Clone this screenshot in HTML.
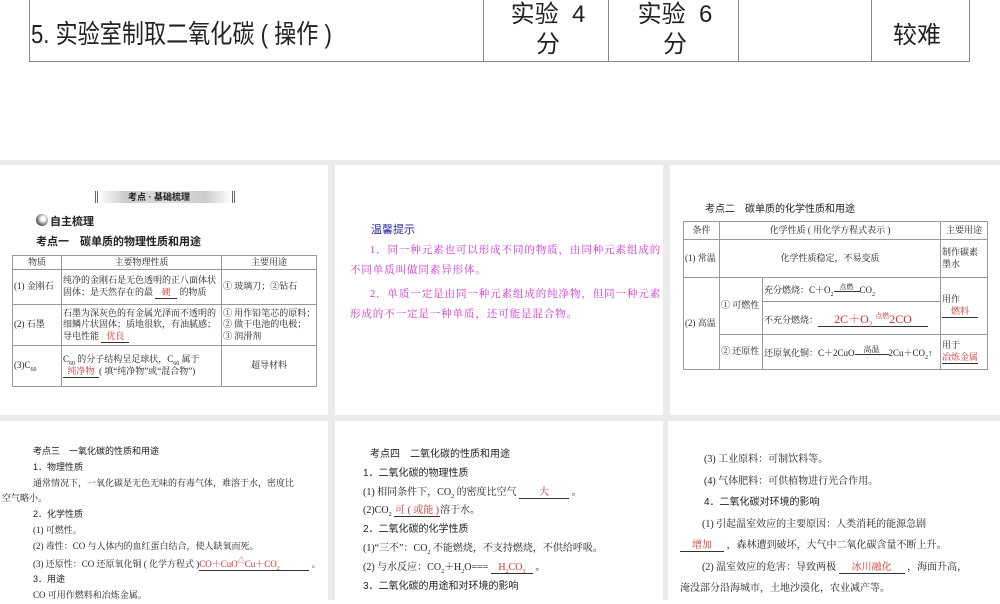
<!DOCTYPE html>
<html><head><meta charset="utf-8"><style>
*{margin:0;padding:0;box-sizing:border-box}
body{width:1000px;height:600px;background:#fff;position:relative;overflow:hidden;font-family:"Liberation Serif","Noto Serif CJK SC",serif;color:#222}
sub{line-height:0}
.a{position:absolute;white-space:nowrap}
.gray{position:absolute;left:0;top:160px;width:1000px;height:440px;background:#ebebeb}
.p{position:absolute;background:#fff}
.s{font-family:"Liberation Sans","Noto Sans CJK SC",sans-serif}
.r{color:#d03030}
.u{border-bottom:1px solid #333;display:inline-block;text-align:center;line-height:11px}
table{border-collapse:collapse;position:absolute;font-size:9px;table-layout:fixed}
td{border:1px solid #999;padding:0 1px;line-height:11.5px;vertical-align:middle;overflow:hidden}
</style></head><body>
<div class="a" style="left:29px;top:0;width:941px;height:62px;border:1px solid #888;border-top:none"></div>
<div class="a" style="left:483px;top:0;width:1px;height:62px;background:#888"></div>
<div class="a" style="left:608px;top:0;width:1px;height:62px;background:#888"></div>
<div class="a" style="left:738px;top:0;width:1px;height:62px;background:#888"></div>
<div class="a" style="left:871px;top:0;width:1px;height:62px;background:#888"></div>
<div class="a s" style="left:31px;top:14px;font-size:26px;transform:scaleX(0.85);transform-origin:left;color:#222">5. 实验室制取二氧化碳 ( 操作 )</div>
<div class="a s" style="left:498px;top:0;width:100px;font-size:24px;line-height:30px;text-align:center;color:#222">实验&nbsp;&nbsp;4<br>分</div>
<div class="a s" style="left:625px;top:0;width:100px;font-size:24px;line-height:30px;text-align:center;color:#222">实验&nbsp;&nbsp;6<br>分</div>
<div class="a s" style="left:893px;top:15px;font-size:24px;color:#222">较难</div>

<div class="gray"></div>
<div class="p" style="left:0;top:165px;width:328px;height:250px"></div>
<div class="a" style="left:95px;top:191px;width:140px;height:12px;background:linear-gradient(90deg,#fff,#ccc 20%,#ddd 50%,#ccc 80%,#fff);border-left:3px double #666;border-right:3px double #666"></div>
<div class="a s" style="left:128px;top:190px;font-size:9px;font-weight:bold">考点 · 基础梳理</div>
<div class="a" style="left:36px;top:214px;width:12px;height:12px;border-radius:6px;background:radial-gradient(circle at 60% 40%,#fff 20%,#555 70%)"></div>
<div class="a s" style="left:50px;top:213px;font-size:11px;font-weight:bold">自主梳理</div>
<div class="a s" style="left:36px;top:233px;font-size:11px;font-weight:bold">考点一　碳单质的物理性质和用途</div>
<table style="left:12px;top:255px;width:305px">
<tr style="height:14px"><td style="width:49px;text-align:center">物质</td><td style="width:160px;text-align:center">主要物理性质</td><td style="text-align:center">主要用途</td></tr>
<tr style="height:35px"><td>(1) 金刚石</td><td>纯净的金刚石是无色透明的正八面体状固体；是天然存在的最 <span class="u r" style="width:22px">硬</span> 的物质</td><td>① 玻璃刀；②钻石</td></tr>
<tr style="height:41px"><td>(2) 石墨</td><td>石墨为深灰色的有金属光泽而不透明的细鳞片状固体；质地很软，有油腻感；导电性能 <span class="u r" style="width:28px">优良</span></td><td style="white-space:nowrap">① 用作铅笔芯的原料；<br>② 做干电池的电极；<br>③ 润滑剂</td></tr>
<tr style="height:41px"><td>(3)C<sub style="font-size:6px">60</sub></td><td>C<sub style="font-size:6px">60</sub> 的分子结构呈足球状，C<sub style="font-size:6px">60</sub> 属于<br><span class="u r" style="width:36px">纯净物</span>( 填“纯净物”或“混合物”)</td><td style="text-align:center">超导材料</td></tr>
</table>
<div class="p" style="left:335px;top:165px;width:328px;height:250px"></div>
<div class="a s" style="left:371px;top:221px;font-size:11px;color:#2a2aa8">温馨提示</div>
<div class="a" style="left:350px;top:241px;width:313px;font-size:10.5px;letter-spacing:0.9px;line-height:20px;color:#d030d0;white-space:normal;text-indent:20px">1．同一种元素也可以形成不同的物质，由同种元素组成的不同单质叫做同素异形体。</div>
<div class="a" style="left:350px;top:285px;width:313px;font-size:10.5px;letter-spacing:0.9px;line-height:20px;color:#d030d0;white-space:normal;text-indent:20px">2．单质一定是由同一种元素组成的纯净物，但同一种元素形成的不一定是一种单质，还可能是混合物。</div>
<div class="p" style="left:670px;top:165px;width:330px;height:250px"></div>
<div class="a s" style="left:705px;top:200px;font-size:10px">考点二　碳单质的化学性质和用途</div>
<table style="left:683px;top:221px;width:304px">
<colgroup><col style="width:36px"><col style="width:43px"><col style="width:178px"><col style="width:47px"></colgroup>
<tr style="height:18px"><td style="text-align:center">条件</td><td colspan="2" style="text-align:center">化学性质 ( 用化学方程式表示 )</td><td style="text-align:center">主要用途</td></tr>
<tr style="height:38px"><td>(1) 常温</td><td colspan="2" style="text-align:center">化学性质稳定，不易变质</td><td>制作碳素<br>墨水</td></tr>
<tr style="height:24px"><td rowspan="3">(2) 高温</td><td rowspan="2">① 可燃性</td><td style="white-space:nowrap">充分燃烧：C＋O<sub style="font-size:6px">2</sub><span style="display:inline-block;border-bottom:1px solid #333;font-size:7px;line-height:8px;width:26px;text-align:center;vertical-align:4px">点燃</span>CO<sub style="font-size:6px">2</sub></td><td rowspan="2">用作<br><span class="u r" style="width:36px">燃料</span></td></tr>
<tr style="height:33px"><td style="white-space:nowrap">不充分燃烧：<span class="u r" style="width:110px;font-size:12px;line-height:14px">2C＋O<sub style="font-size:7px">2</sub> <span style="font-size:7px;vertical-align:5px">点燃</span>2CO</span></td></tr>
<tr style="height:35px"><td>② 还原性</td><td style="white-space:nowrap">还原氧化铜：C＋2CuO<span style="display:inline-block;border-bottom:1px solid #333;font-size:8px;line-height:9px;width:34px;text-align:center;vertical-align:4px">高温</span>2Cu＋CO<sub style="font-size:6px">2</sub>↑</td><td>用于<br><span class="u r">冶炼金属</span></td></tr>
</table>
<div class="p" style="left:0;top:421px;width:328px;height:179px"></div>
<div class="a" style="left:20px;top:444px;font-size:9px;line-height:15.8px">
<div class="s" style="padding-left:13px">考点三　一氧化碳的性质和用途</div>
<div class="s" style="padding-left:13px">1．物理性质</div>
<div style="padding-left:13px">通常情况下，一氧化碳是无色无味的有毒气体，难溶于水，密度比</div>
<div style="margin-left:-18px">空气略小。</div>
<div class="s" style="padding-left:13px">2．化学性质</div>
<div style="padding-left:13px">(1) 可燃性。</div>
<div style="padding-left:13px">(2) 毒性：CO 与人体内的血红蛋白结合，使人缺氧而死。</div>
<div style="padding-left:13px">(3) 还原性：CO 还原氧化铜 ( 化学方程式 )<span class="u r" style="width:110px;text-align:left">CO＋CuO<span style="font-size:7px;vertical-align:5px">△</span>Cu＋CO<sub style="font-size:6px">2</sub></span> 。</div>
<div class="s" style="padding-left:13px">3．用途</div>
<div style="padding-left:13px">CO 可用作燃料和冶炼金属。</div>
</div>
<div class="p" style="left:335px;top:421px;width:328px;height:179px"></div>
<div class="a" style="left:363px;top:446px;font-size:10px;line-height:18.8px">
<div class="s" style="padding-left:7px">考点四　二氧化碳的性质和用途</div>
<div class="s">1．二氧化碳的物理性质</div>
<div>(1) 相同条件下，CO<sub style="font-size:6px">2</sub> 的密度比空气 <span class="u r" style="width:50px">大</span> 。</div>
<div>(2)CO<sub style="font-size:6px">2</sub> <span class="u r" style="width:46px">可 ( 或能 )</span>溶于水。</div>
<div class="s">2．二氧化碳的化学性质</div>
<div>(1)“三不”：CO<sub style="font-size:6px">2</sub> 不能燃烧，不支持燃烧，不供给呼吸。</div>
<div>(2) 与水反应：CO<sub style="font-size:6px">2</sub>＋H<sub style="font-size:6px">2</sub>O=== <span class="u r" style="width:42px">H<sub style="font-size:6px">2</sub>CO<sub style="font-size:6px">3</sub></span> 。</div>
<div class="s">3．二氧化碳的用途和对环境的影响</div>
</div>
<div class="p" style="left:668px;top:421px;width:332px;height:179px"></div>
<div class="a" style="left:680px;top:449px;font-size:10px;line-height:21.5px">
<div style="padding-left:24px">(3) 工业原料：可制饮料等。</div>
<div style="padding-left:24px">(4) 气体肥料：可供植物进行光合作用。</div>
<div class="s" style="padding-left:24px">4．二氧化碳对环境的影响</div>
<div style="padding-left:22px">(1) 引起温室效应的主要原因：人类消耗的能源急剧</div>
<div><span class="u r" style="width:44px">增加</span> ，森林遭到破坏，大气中二氧化碳含量不断上升。</div>
<div style="padding-left:22px">(2) 温室效应的危害：导致两极 <span class="u r" style="width:66px">冰川融化</span> ，海面升高，</div>
<div>淹没部分沿海城市，土地沙漠化，农业减产等。</div>
</div>
</body></html>
